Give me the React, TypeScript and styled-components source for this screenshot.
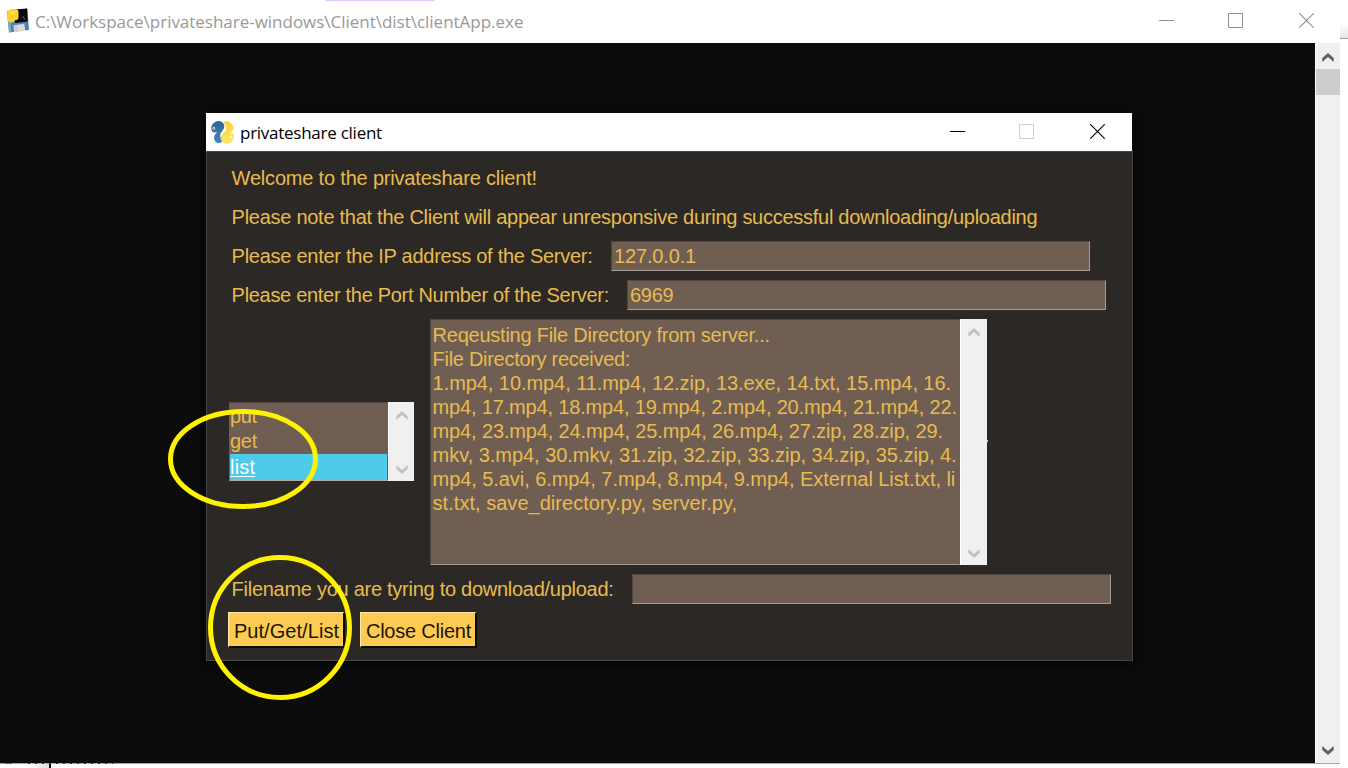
import React from "react";
import styled, { createGlobalStyle } from "styled-components";

const Global = createGlobalStyle`
  html, body { margin: 0; padding: 0; background: #fff; }
  body { overflow: hidden; }
  * { box-sizing: border-box; }
`;

const uiFont = `"Open Sans", "Noto Sans", sans-serif`;
const formFont = `"Liberation Sans", Arial, sans-serif`;

const Desktop = styled.main`
  position: relative;
  width: 1348px;
  height: 768px;
  overflow: hidden;
  background: #fff;
`;

const Console = styled.section`
  display: flex;
  flex-direction: column;
  width: 1340px;
  height: 764px;
  border-bottom: 1px solid #a6a6a6;
`;

const ConsoleTitle = styled.header`
  display: flex;
  align-items: center;
  height: 43px;
  padding: 0 26px 2px 6px;
  background: #fff;
  color: #999;
  font: 17px/24px ${uiFont};
`;

const ConsoleName = styled.h1`
  flex: 1;
  margin: 2px 0 0 5px;
  font: inherit;
  letter-spacing: -0.02px;
  white-space: pre;
`;

const Controls = styled.div<{ $color: string }>`
  display: flex;
  color: ${(p) => p.$color};
  svg { display: block; }
`;

const MinimizeBox = styled.span`
  width: 69px;
`;

const MaximizeBox = styled.span<{ $color?: string }>`
  width: 71px;
  color: ${(p) => p.$color ?? "inherit"};
`;

const ConsoleBody = styled.div`
  display: flex;
  flex: 1;
`;

const Terminal = styled.div`
  flex: 1;
  margin-right: 1px;
  background: #0c0c0c;
`;

const ConsoleScroll = styled.div`
  display: flex;
  flex-direction: column;
  align-items: center;
  width: 24px;
  padding-bottom: 8px;
  background: #f0f0f0;
`;

const ConsoleArrowUp = styled.div`
  height: 26px;
  padding-top: 10px;
`;

const ConsoleThumb = styled.div`
  width: 24px;
  height: 26px;
  margin-bottom: auto;
  background: #cdcdcd;
`;

const TopAccent = styled.div`
  position: absolute;
  left: 325px;
  top: 0;
  width: 110px;
  height: 1px;
  background: #e3c8fb;
`;

const RightSliver = styled.div`
  position: absolute;
  left: 1340px;
  top: 24px;
  width: 8px;
  height: 15px;
  border-bottom: 1px solid #a0a0a0;
  background: linear-gradient(#fff, #e4e4e4);
`;

const BottomSliver = styled.div`
  position: absolute;
  left: 0;
  top: 764px;
  width: 51px;
  height: 4px;
  border-right: 2px solid #111;
  background: linear-gradient(90deg, #fff 60%, #dedede);
`;

const HiddenRow = styled.div`
  position: absolute;
  left: 0;
  top: 763px;
  width: 113px;
  height: 1px;
  background: linear-gradient(90deg, #999 5px, #4468a8 5px 12px, #a6a6a6 12px 25px, transparent 25px),
    repeating-linear-gradient(90deg, #303048 0 2px, #bba98a 2px 4px, #a6a6a6 4px 7px);
`;

const Dialog = styled.section`
  position: absolute;
  left: 206px;
  top: 113px;
  display: flex;
  flex-direction: column;
  width: 927px;
  height: 548px;
  box-shadow: 0 3px 12px 2px #050505;
`;

const DialogTitle = styled.header`
  display: flex;
  align-items: center;
  height: 38px;
  margin-right: 1px;
  padding: 0 27px 0 5px;
  background: #fff;
  color: #000;
  font: 17px/24px ${uiFont};

  ${Controls} { margin-bottom: 1px; }
`;

const DialogName = styled.h2`
  flex: 1;
  margin: 1px 0 0 6px;
  font: inherit;
  letter-spacing: -0.26px;
`;

const Form = styled.form`
  display: flex;
  flex: 1;
  flex-direction: column;
  gap: 9px;
  padding: 11px 0 0 22px;
  border: 1px solid #47474a;
  background: #2c2825;
  color: #e7bb4e;
  font: 20px/30px ${formFont};
`;

const Row = styled.div`
  display: flex;
  height: 30px;
`;

const Label = styled.label<{ $track: number; $width?: number }>`
  width: ${(p) => (p.$width ? `${p.$width}px` : "auto")};
  padding-left: 2.6px;
  letter-spacing: ${(p) => p.$track}px;
  white-space: pre;
`;

const Field = styled.div`
  width: 479px;
  height: 30px;
  padding-left: 2px;
  border: 1px solid;
  border-color: #51453d #a89e97 #a89e97 #51453d;
  background: #705e52;
  line-height: 28px;
`;

const FieldText = styled.span<{ $track: number }>`
  letter-spacing: ${(p) => p.$track}px;
`;

const Middle = styled.div`
  display: flex;
  align-items: center;
  gap: 16px;
  height: 246px;
`;

const ListBox = styled.div`
  display: flex;
  width: 185px;
  height: 79px;
  margin-bottom: 2px;
`;

const Options = styled.div`
  flex: 1;
  border: 1px solid;
  border-color: #51453d #705e52 #b3aaa4 #705e52;
  background: #705e52;
  line-height: 26px;
`;

const Option = styled.div<{ $selected?: boolean; $track: number }>`
  height: ${(p) => (p.$selected ? 26 : 25.5)}px;
  background: ${(p) => (p.$selected ? "#4ecbe8" : "transparent")};
  color: ${(p) => (p.$selected ? "#fff" : "inherit")};
  text-decoration: ${(p) => (p.$selected ? "underline" : "none")};
  text-decoration-thickness: 1px;
  text-underline-offset: 2px;
  letter-spacing: ${(p) => p.$track}px;
`;

const ScrollTrack = styled.div`
  display: flex;
  flex-direction: column;
  align-items: center;
  justify-content: space-between;
  width: 26px;
  padding: 9px 0 7px;
  border-left: 1px solid #fff;
  background: #f0f0f0;
  color: #c2c2c2;
`;

const Output = styled.div`
  position: relative;
  display: flex;
  width: 557px;
  height: 246px;

  ${ScrollTrack} { width: 27px; padding-right: 1px; }
`;

const OutputText = styled.div`
  flex: 1;
  padding: 3px 0 0 1.6px;
  border: 1px solid;
  border-color: #51453d #705e52 #a89e97 #51453d;
  background: #705e52;
  line-height: 24px;
`;

const OutputLine = styled.div<{ $track: number }>`
  height: 24px;
  letter-spacing: ${(p) => p.$track}px;
  white-space: pre;
`;

const SashMark = styled.i`
  position: absolute;
  right: -1px;
  top: 121px;
  width: 2px;
  height: 2px;
  background: #ddd;
`;

const Buttons = styled.div`
  display: flex;
  gap: 15px;
  margin: -1px 0 0 -1px;
`;

const Button = styled.button<{ $track: number }>`
  width: 117px;
  height: 36px;
  padding: 2px 0 0 1px;
  border: 2px solid;
  border-width: 1px 2px 2px 1px;
  border-color: #ffe9a8 #0b0a08 #0b0a08 #ffe9a8;
  background: #fdcb52;
  color: #1c1508;
  font: 20px/30px ${formFont};
  letter-spacing: ${(p) => p.$track}px;
  white-space: nowrap;
`;

const Marks = styled.svg`
  position: absolute;
  left: 0;
  top: 0;
  pointer-events: none;
`;

const outputLines: [string, number][] = [
  ["Reqeusting File Directory from server...", -0.24],
  ["File Directory received:", -0.29],
  ["1.mp4, 10.mp4, 11.mp4, 12.zip, 13.exe, 14.txt, 15.mp4, 16.", -0.065],
  ["mp4, 17.mp4, 18.mp4, 19.mp4, 2.mp4, 20.mp4, 21.mp4, 22.", -0.17],
  ["mp4, 23.mp4, 24.mp4, 25.mp4, 26.mp4, 27.zip, 28.zip, 29.", -0.14],
  ["mkv, 3.mp4, 30.mkv, 31.zip, 32.zip, 33.zip, 34.zip, 35.zip, 4.", -0.035],
  ["mp4, 5.avi, 6.mp4, 7.mp4, 8.mp4, 9.mp4, External List.txt, li", -0.07],
  ["st.txt, save_directory.py, server.py,", 0.03],
];

const Minimize = () => (
  <svg width="15" height="15" viewBox="0 0 15 15"><path d="M0 7.5H15" stroke="currentColor" /></svg>
);
const Maximize = () => (
  <svg width="15" height="15" viewBox="0 0 15 15"><path d="M.5.5h14v14H.5z" fill="none" stroke="currentColor" /></svg>
);
const Close = () => (
  <svg width="15" height="15" viewBox="0 0 15 15"><path d="M.3.3 14.7 14.7M14.7.3.3 14.7" stroke="currentColor" strokeWidth="1.1" /></svg>
);

const Chevron = ({ down, color = "currentColor" }: { down?: boolean; color?: string }) => (
  <svg width="12" height="9" viewBox="0 0 12 9" display="block">
    <path d={down ? "M.3 0 6 5 11.700 0V4L6 9 .3 4Z" : "M.3 9 6 4 11.700 9V5L6 0 .3 5Z"} fill={color} />
  </svg>
);

const DiskIcon = () => (
  <svg width="24" height="25" viewBox="0 0 24 25">
    <path d="M1 3.500 21.500 .5 23 22 3 24.500Z" fill="#4d83ad" />
    <path d="M1 3.500 4 3 5.200 23.500 3 24.500Z" fill="#79a9cc" />
    <path d="M9 1.500 21 .6 21.600 13.500 9 15Z" fill="#080808" />
    <path d="M1.500 4C2 1.500 5 .8 8 1.200 11 .8 12.500 2 12.500 4.500V9.500C12.500 11.500 11 12 9.500 12 8 12 8 14.500 6 14.500 3 15 .8 12.500 1 9.500Z" fill="#fbd22e" />
    <path d="M4.500 5h3v2" fill="none" stroke="#fff08c" />
    <path d="M15.500 10 17.500 8.500 18.500 12" fill="none" stroke="#52575a" />
    <path d="M7.500 17.200 18.300 15.700 19.300 23 8 24Z" fill="#d9dbdd" />
    <path d="M8.700 18.200 11 18 11.300 22.700 9 23Z" fill="#c6c9cc" />
  </svg>
);

const SnakesIcon = () => (
  <svg width="23" height="23" viewBox="0 0 23 23">
    <defs>
      <linearGradient id="blue" x2="0" y2="1"><stop stopColor="#2f648f" /><stop offset="1" stopColor="#4389c0" /></linearGradient>
      <linearGradient id="yellow" x2="0" y2="1"><stop stopColor="#ffcf35" /><stop offset="1" stopColor="#ffe56c" /></linearGradient>
    </defs>
    <path d="M.2 7C.2 4 3.800.2 7.200.1C10.500 0 13.300 2.200 13.300 5.300C13.300 9.300 9.800 10.700 9.300 13.600C8.900 16.200 10 18.800 11.800 20.200C10.300 21.800 8 22.600 6 21.700C3.700 20.600 2.800 18.300 3.100 16C3.400 13.900 5 12.700 6 11L3.500 11.600C1.500 11.500.2 9.500.2 7Z" fill="url(#blue)" />
    <path d="M12.200 1.600C14 .2 15.800-.2 17.600.6C20.300 2 22.500 4.300 22.500 7C22.500 10 19.500 11.500 18.200 13.300L20.500 12.200C22 12 22.900 13.700 22.800 15.800C22.700 19.500 19.500 22.800 15.800 22.800C12.500 22.800 9.900 20.300 9.900 17C9.900 12.800 14.200 11.500 14.900 8.500C15.500 6 14.200 3.500 12.200 1.600Z" fill="url(#yellow)" />
    <circle cx="2.700" cy="7.300" r="1.100" fill="none" stroke="#fff" strokeWidth=".8" />
    <circle cx="20" cy="15.800" r="1.100" fill="none" stroke="#fff" strokeWidth=".8" />
  </svg>
);

export default function App() {
  return (
    <Desktop>
      <Global />
      <Console>
        <ConsoleTitle>
          <DiskIcon />
          <ConsoleName>{"C:\\Workspace\\privateshare-windows\\Client\\dist\\clientApp.exe"}</ConsoleName>
          <Controls $color="#8f8f8f">
            <MinimizeBox><Minimize /></MinimizeBox>
            <MaximizeBox><Maximize /></MaximizeBox>
            <Close />
          </Controls>
        </ConsoleTitle>
        <ConsoleBody>
          <Terminal />
          <ConsoleScroll>
            <ConsoleArrowUp><Chevron color="#606060" /></ConsoleArrowUp>
            <ConsoleThumb />
            <Chevron down color="#606060" />
          </ConsoleScroll>
        </ConsoleBody>
      </Console>
      <TopAccent />
      <RightSliver />
      <BottomSliver />
      <HiddenRow />

      <Dialog>
        <DialogTitle>
          <SnakesIcon />
          <DialogName>privateshare client</DialogName>
          <Controls $color="#000">
            <MinimizeBox><Minimize /></MinimizeBox>
            <MaximizeBox $color="#ccc"><Maximize /></MaximizeBox>
            <Close />
          </Controls>
        </DialogTitle>
        <Form>
          <Row><Label $track={-0.19}>Welcome to the privateshare client!</Label></Row>
          <Row>
            <Label $track={-0.27}>Please note that the Client will appear unresponsive during successful downloading/uploading</Label>
          </Row>
          <Row>
            <Label $track={-0.265} $width={382}>Please enter the IP address of the Server:</Label>
            <Field><FieldText $track={-0.15}>127.0.0.1</FieldText></Field>
          </Row>
          <Row>
            <Label $track={-0.3} $width={398}>Please enter the Port Number of the Server:</Label>
            <Field><FieldText $track={-0.3}>6969</FieldText></Field>
          </Row>
          <Middle>
            <ListBox>
              <Options>
                <Option $track={-0.4}>put</Option>
                <Option $track={-0.3}>get</Option>
                <Option $track={0.2} $selected>list</Option>
              </Options>
              <ScrollTrack><Chevron /><Chevron down /></ScrollTrack>
            </ListBox>
            <Output>
              <OutputText>
                {outputLines.map(([text, track]) => (
                  <OutputLine key={text} $track={track}>{text}</OutputLine>
                ))}
              </OutputText>
              <ScrollTrack><Chevron /><Chevron down /></ScrollTrack>
              <SashMark />
            </Output>
          </Middle>
          <Row>
            <Label $track={-0.27} $width={403}>Filename you are tyring to download/upload:</Label>
            <Field />
          </Row>
          <Buttons>
            <Button type="button" $track={0.05}>Put/Get/List</Button>
            <Button type="button" $track={-0.22}>Close Client</Button>
          </Buttons>
        </Form>
      </Dialog>

      <Marks width="1348" height="768" viewBox="0 0 1348 768" fill="none" stroke="#fff200" strokeWidth="5">
        <ellipse cx="243" cy="459" rx="72.500" ry="47.500" />
        <ellipse cx="280" cy="627.500" rx="69.500" ry="70" />
      </Marks>
    </Desktop>
  );
}
